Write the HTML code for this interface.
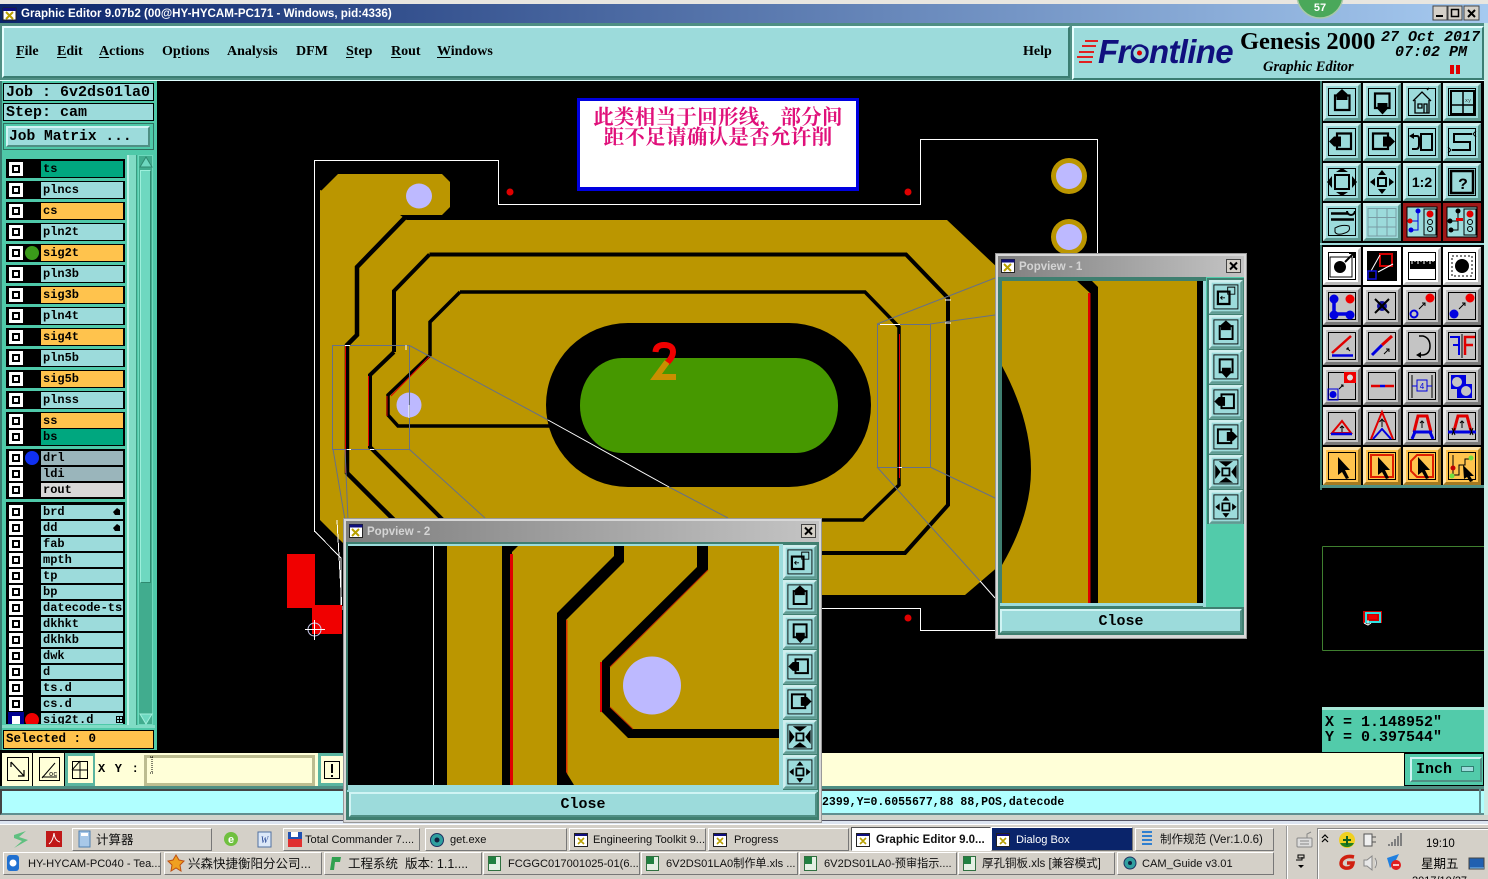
<!DOCTYPE html>
<html><head><meta charset="utf-8"><title>Graphic Editor</title>
<style>
html,body{margin:0;padding:0;background:#000}
#p{position:relative;width:1488px;height:879px;overflow:hidden;background:#000;font-family:"Liberation Sans","Noto Sans CJK SC",sans-serif}
#p div,#p svg,#p span.a{position:absolute;box-sizing:border-box}
.mn{font:bold 14px "Liberation Serif",serif;color:#000;top:44px;white-space:nowrap}
.mn u{text-underline-offset:2px}
.mo{font-family:"Liberation Mono",monospace;font-weight:bold;color:#000;white-space:nowrap}
.fr{background:#000;left:6px;width:119px}
.r{left:41px;width:82px;font:bold 12px/14px "Liberation Mono",monospace;color:#000;padding-left:2px;white-space:nowrap;overflow:hidden}
.l1{line-height:17px}
.c{left:9px;width:14px;height:14px;background:#fff}
.c:after{content:"";position:absolute;left:3px;top:3px;width:8px;height:8px;border:2px solid #000;box-sizing:border-box;background:#fff}
.d{left:25px;width:14px;height:14px;border-radius:50%}
.tb{height:23px;background:#d4d0c8;border:1px solid;border-color:#fff #777 #777 #fff;font-size:11.1px;line-height:22px;color:#111;white-space:nowrap;overflow:hidden;padding-left:21px}
.bev{border:3px solid;border-color:#d0f4f4 #4f8f84 #4f8f84 #d0f4f4;background:#9cdbdb}
.ttl{background:linear-gradient(90deg,#7f7f7f,#c4c4c4);color:#d4d4d4;font-size:11.5px;font-weight:bold}
</style></head><body><div id="p">

<!-- top chrome -->
<div style="left:0;top:0;width:1488px;height:4px;background:#e8e6e0"></div>
<div style="left:0;top:4px;width:1488px;height:19px;background:linear-gradient(90deg,#0a246a,#a6caf0)"></div>
<div style="left:21px;top:7px;color:#fff;font-size:11.6px;font-weight:bold;white-space:nowrap">Graphic Editor 9.07b2 (00@HY-HYCAM-PC171 - Windows, pid:4336)</div>
<div style="left:0;top:23px;width:1488px;height:58px;background:#4f8f84"></div>
<div style="left:2px;top:26px;width:1068px;height:52px;background:#9cdbdb;border:2px solid;border-color:#e6ffff #3b7d72 #3b7d72 #e6ffff"></div>
<div style="left:1072px;top:26px;width:412px;height:54px;background:#9cdbdb;border:2px solid;border-color:#e6ffff #3b7d72 #3b7d72 #e6ffff"></div>
<div style="left:0;top:80px;width:1488px;height:1px;background:#e0ffff"></div>

<div class="mn" style="left:16px"><u>F</u>ile</div>
<div class="mn" style="left:57px"><u>E</u>dit</div>
<div class="mn" style="left:99px"><u>A</u>ctions</div>
<div class="mn" style="left:162px">O<u>p</u>tions</div>
<div class="mn" style="left:227px">Analysis</div>
<div class="mn" style="left:296px">DFM</div>
<div class="mn" style="left:346px"><u>S</u>tep</div>
<div class="mn" style="left:391px"><u>R</u>out</div>
<div class="mn" style="left:437px"><u>W</u>indows</div>
<div class="mn" style="left:1023px">Help</div>

<div style="left:1098px;top:33px;font:italic bold 33px 'Liberation Sans',sans-serif;letter-spacing:-.7px;color:#10107e;white-space:nowrap">Frontline</div>
<div style="left:1240px;top:28px;font:bold 24.5px 'Liberation Serif',serif;color:#000;white-space:nowrap">Genesis 2000</div>
<div style="left:1263px;top:59px;font:italic bold 14.5px 'Liberation Serif',serif;color:#000;white-space:nowrap">Graphic Editor</div>
<div class="mo" style="left:1381px;top:29px;font-size:15px;font-style:italic">27 Oct 2017</div>
<div class="mo" style="left:1395px;top:44px;font-size:15px;font-style:italic">07:02 PM</div>
<div style="left:1450px;top:65px;width:4px;height:9px;background:#e00000"></div>
<div style="left:1456px;top:65px;width:4px;height:9px;background:#e00000"></div>

<!-- main vector canvas -->
<svg style="left:0;top:0" width="1488" height="879" viewBox="0 0 1488 879">
<defs>
<g id="ft"><rect width="38" height="38" fill="#cfeeee"/><path d="M38 0V38H0L3 35H35V3Z" fill="#5f9a92"/><rect x="3" y="3" width="32" height="32" fill="#9cdbdb"/><rect x="5.5" y="5.5" width="27" height="27" fill="none" stroke="#000"/></g>
<g id="fg"><rect width="38" height="38" fill="#e8e8e8"/><path d="M38 0V38H0L3 35H35V3Z" fill="#7a7a7a"/><rect x="3" y="3" width="32" height="32" fill="#c4c4c4"/><rect x="5.5" y="5.5" width="27" height="27" fill="none" stroke="#000"/></g>
<g id="fo"><rect width="38" height="38" fill="#ffe4a8"/><path d="M38 0V38H0L3 35H35V3Z" fill="#a57a22"/><rect x="3" y="3" width="32" height="32" fill="#ffc34d"/><rect x="5.5" y="5.5" width="27" height="27" fill="none" stroke="#000"/></g>
<g id="fw"><rect width="38" height="38" fill="#fff"/><path d="M38 0V38H0L3 35H35V3Z" fill="#bbb"/><rect x="5.5" y="5.5" width="27" height="27" fill="#fff" stroke="#000"/></g>
<g id="iUp"><path d="M12 12.500H26.500V27H12Z" fill="none" stroke="#000" stroke-width="2.200"/><path d="M19 6l5.500 5v6h-11v-6z"/></g>
<g id="iDn"><path d="M12 10.500H26.500V25H12Z" fill="none" stroke="#000" stroke-width="2.200"/><path d="M14.500 20h10v6L19.500 31.500 14.500 26z"/></g>
<g id="iL"><path d="M14 10.500H28V26H14Z" fill="none" stroke="#000" stroke-width="2.200"/><path d="M6 18.500l5-5h7v10h-7z"/></g>
<g id="iR"><path d="M10 10.500H25V26H10Z" fill="none" stroke="#000" stroke-width="2.200"/><path d="M32 18.500l-5-5h-7v10h7z"/></g>
<g id="iFit"><path d="M12 12H26V26H12Z" fill="none" stroke="#000" stroke-width="2"/><path d="M13 9H25L19 5ZM13 29H25L19 33ZM9 13V25L4 19ZM29 13V25L34 19Z"/></g>
<g id="iFit2"><path d="M15 15H23V23H15Z" fill="none" stroke="#000" stroke-width="2"/><path d="M11 7H27L19 13ZM11 31H27L19 25ZM7 11V27L13 19ZM31 11V27L25 19Z"/></g>
<g id="iPan"><path d="M15 15H23V23H15Z" fill="none" stroke="#000" stroke-width="2"/><path d="M19 7l4 5H15ZM19 31l4-5H15ZM7 19l5-4v8ZM31 19l-5-4v8Z"/></g>
<g id="iZm"><path d="M10 13H23V27H10Z" fill="none" stroke="#000" stroke-width="2.500"/><path d="M21 8H29V16H21Z" fill="none" stroke="#000"/><path d="M18 20h-5m2-2l-2 2 2 2" fill="none" stroke="#000"/></g>
</defs>

<rect x="157" y="81" width="1163" height="672" fill="#000"/>

<!-- copper -->
<path d="M320 192L338 174H442L450 182V207L442 215H400L350 265V330L330 350V500L320 510V192Z" fill="#bb9600"/>
<path d="M407 220H947L1000 270V565L965 595H820L345 545L320 520V190L400 215Z" fill="#bb9600"/>
<!-- oval -->
<rect x="546" y="323" width="325" height="164" rx="82" ry="82" fill="#000"/>
<rect x="580" y="358" width="258" height="95" rx="42" ry="47" fill="#469800"/>
<g fill="none" stroke="#000" stroke-linejoin="miter">
<path d="M450 217.500H405L357 267V335L347 345V473L392 518L420 545" stroke-width="4.500"/>
<path d="M429.500 254.500H906L948 298V505L905 553H800M394 352V291L429.500 254.500M394 352L370 375V447L443 520L470 548" stroke-width="4"/>
<path d="M460 292H865L899 327V485L863 520H700M460 292L430 322V355L388 395V415L398 426H550" stroke-width="3.500"/>
</g>
<g stroke="#e00000" fill="none" stroke-width="1">
<path d="M345.500 346V473M368.500 376V446M391 396L429 357M387 396V416M899.500 334V478"/>
</g>
<ellipse cx="419" cy="196" rx="13" ry="12.500" fill="#bdb9ff"/>
<ellipse cx="409" cy="405" rx="12.500" ry="12.500" fill="#bdb9ff"/>
<circle cx="1069" cy="176" r="18" fill="#bb9600"/><circle cx="1069" cy="176" r="13" fill="#bdb9ff"/>
<circle cx="1069" cy="237" r="18" fill="#bb9600"/><circle cx="1069" cy="237" r="13" fill="#bdb9ff"/>
<!-- the 2 -->
<path d="M655.500 352Q656 345 664 345Q673 345 673 352Q673 357 667 363" fill="none" stroke="#f00000" stroke-width="6"/>
<path d="M667 362L656 377H676" fill="none" stroke="#c98f00" stroke-width="6"/>

<!-- profile -->
<g fill="none" stroke="#fff" stroke-width="1" shape-rendering="crispEdges">
<path d="M314.500 532V160.500H498.500V204.500H920.500V139.500H1097.500V260"/>
<path d="M314.500 531L341 558V620"/>
<path d="M820 608.500H920.500V630.500H996"/>
<path d="M337 520L342 610"/>
</g>
<g fill="#e00000"><ellipse cx="510" cy="192" rx="3.500" ry="3.500"/><ellipse cx="908" cy="192" rx="3.500" ry="3.500"/><ellipse cx="908" cy="618" rx="3.500" ry="3.500"/></g>
<!-- popview frames -->
<g fill="none" stroke="#667088" stroke-width="1">
<path d="M332.500 345.500H409.500V449.500H332.500ZM409.500 345.500L548 420M669 487L728 518M333 449L345 520M345 449L348 520M409 449L485 518"/>
<path d="M877.500 324.500H930.500V467.500H877.500ZM877 324L995 278M930 324L995 315M930 467L995 498M877 467L980 581"/>
</g>
<path d="M548 420L669 487M980 581L995 598" stroke="#fff" fill="none"/>
<path d="M345 345.500h5M406 345v5M347 449.500h4M409 405V418M370 449.500h4M880 324.500h20M899 467.500h3M945 300h6M945 323h6" stroke="#fff" fill="none"/>
<!-- red block and cross -->
<rect x="287" y="554" width="28" height="54" fill="#f00000"/>
<rect x="312" y="605" width="30" height="29" fill="#f00000"/>
<g fill="none" stroke="#fff"><circle cx="314.500" cy="629.500" r="6.500" stroke="#cce"/><path d="M305 629.500H325M314.500 620V640"/></g>

<!-- title bar icon + buttons -->
<rect x="3" y="8" width="13" height="12" fill="#fff" stroke="#222"/><rect x="3" y="8" width="13" height="3" fill="#10107e"/><path d="M6 12l7 7M13 12l-7 7" stroke="#b8a000" stroke-width="2"/>
<g><rect x="1433" y="6" width="14" height="14" fill="#d4d0c8" stroke="#444"/><rect x="1436" y="15" width="7" height="2" fill="#000"/>
<rect x="1448" y="6" width="14" height="14" fill="#d4d0c8" stroke="#444"/><rect x="1451.500" y="9.500" width="7" height="7" fill="none" stroke="#000" stroke-width="1.500"/>
<rect x="1464" y="6" width="15" height="14" fill="#d4d0c8" stroke="#444"/><path d="M1468 10l7 7M1475 10l-7 7" stroke="#000" stroke-width="2"/></g>
<!-- badge -->
<circle cx="1320" cy="-5" r="23" fill="#4aa85a" stroke="#a8c8a8" stroke-width="1.500"/>
<text x="1320" y="11" text-anchor="middle" font-family="Liberation Sans" font-weight="bold" font-size="11" fill="#fff">57</text>
<!-- frontline stripes -->
<g fill="#e02020"><path d="M1085 40h13v2h-13zM1082 45h14v2h-14zM1079 51h15v2h-15zM1077 56h16v2h-16zM1079 61h13v2h-13z"/></g>
<circle cx="1139.500" cy="53" r="7.500" fill="#9cdbdb" stroke="#10107e" stroke-width="2.500"/><circle cx="1139.500" cy="53" r="2.500" fill="#e00000"/>

<!-- right toolbar -->
<rect x="1320" y="81" width="164" height="409" fill="#000"/>
<rect x="1320" y="81" width="2" height="409" fill="#3b7d72"/>
<g transform="translate(1323,83)"><use href="#ft"/><use href="#iUp"/></g>
<g transform="translate(1363,83)"><use href="#ft"/><use href="#iDn"/></g>
<g transform="translate(1403,83)"><use href="#ft"/><path d="M10 18L19 9 28 18M12 17V30H26V17M15 21h4v4h-4zM21 21h3v9h-3zM24 7l2-2" fill="none" stroke="#000" stroke-width="1.300"/></g>
<g transform="translate(1443,83)"><use href="#ft"/><path d="M8 8H31V31H8Z" fill="none" stroke="#000" stroke-width="2"/><path d="M20 8V31M8 22H31" fill="none" stroke="#000" stroke-width="1.500"/><text x="22" y="19" font-size="5" font-family="Liberation Mono" fill="#333">xy</text></g>

<g transform="translate(1323,123)"><use href="#ft"/><use href="#iL"/></g>
<g transform="translate(1363,123)"><use href="#ft"/><use href="#iR"/></g>
<g transform="translate(1403,123)"><use href="#ft"/><path d="M18 11H29V27H18Z" fill="none" stroke="#000" stroke-width="2"/><path d="M10 13h4q2 0 2 3v6q0 4-3 4h-4" fill="none" stroke="#000" stroke-width="2"/><path d="M6 13l5-3v6z"/></g>
<g transform="translate(1443,123)"><use href="#ft"/><path d="M29 11H11V19H27V27H9" fill="none" stroke="#000" stroke-width="2"/><path d="M33 8l-3 3 3 3M5 24l3 3-3 3" fill="none" stroke="#000"/></g>

<g transform="translate(1323,163)"><use href="#ft"/><use href="#iFit"/></g>
<g transform="translate(1363,163)"><use href="#ft"/><use href="#iPan"/></g>
<g transform="translate(1403,163)"><use href="#ft"/><text x="19" y="24" text-anchor="middle" font-family="Liberation Sans" font-weight="bold" font-size="14">1:2</text></g>
<g transform="translate(1443,163)"><use href="#ft"/><rect x="8" y="8" width="22" height="22" fill="none" stroke="#000" stroke-width="2.500"/><text x="20" y="26" text-anchor="middle" font-family="Liberation Mono" font-weight="bold" font-size="16">?</text></g>

<g transform="translate(1323,203)"><use href="#ft"/><path d="M8 10.500h17M8 16.500H31" stroke="#000" stroke-width="2.500"/><path d="M24 8a4 4 0 1 0 8 0" fill="none" stroke="#000" stroke-width="2"/><path d="M12 25q7-4 14-2q2 5-4 7q-8 3-10-1z" fill="none" stroke="#000"/></g>
<g transform="translate(1363,203)"><rect width="38" height="38" fill="#cfeeee"/><path d="M38 0V38H0L3 35H35V3Z" fill="#5f9a92"/><rect x="3" y="3" width="32" height="32" fill="#9cdbdb"/><path d="M5 5.500H33V33H5ZM5 14.500H33M5 24H33M14 5V33M24 5V33" fill="none" stroke="#7a9ca4"/></g>
<g transform="translate(1403,203)"><rect width="38" height="38" fill="#a01818"/><rect x="2" y="2" width="34" height="34" fill="#a01818"/><rect x="4" y="4" width="30" height="30" fill="#9cdbdb" stroke="#000"/><rect x="21" y="6" width="12" height="26" fill="none" stroke="#000"/><circle cx="27" cy="11" r="3.500" fill="#e00000"/><circle cx="27" cy="19" r="2.500" fill="none" stroke="#000"/><circle cx="27" cy="26" r="2.500" fill="none" stroke="#000"/><path d="M15 8V27H9M7 18H15" fill="none" stroke="#0000e0" stroke-width="1"/><circle cx="15" cy="8" r="2.500" fill="#0000e0"/><circle cx="8" cy="27" r="2.500" fill="#0000e0"/><circle cx="7" cy="18" r="2.500" fill="#e00000"/></g>
<g transform="translate(1443,203)"><rect width="38" height="38" fill="#a01818"/><rect x="4" y="4" width="30" height="30" fill="#9cdbdb" stroke="#000"/><rect x="21" y="6" width="12" height="26" fill="none" stroke="#000"/><circle cx="27" cy="11" r="3.500" fill="#e00000"/><circle cx="27" cy="19" r="2.500" fill="none" stroke="#000"/><circle cx="27" cy="26" r="2.500" fill="none" stroke="#000"/><path d="M15 8V27H9M7 18H15" fill="none" stroke="#000"/><circle cx="15" cy="8" r="2.500"/><circle cx="8" cy="27" r="2.500"/><circle cx="7" cy="18" r="2.500"/><path d="M13 15h7v3h-7z" fill="#e00000"/></g>

<rect x="1320" y="243" width="164" height="2" fill="#9cdbdb"/>

<g transform="translate(1323,247)"><use href="#fw"/><rect x="7" y="10" width="22" height="20" fill="#fff" stroke="#000"/><circle cx="17" cy="20" r="6"/><path d="M22 15L31 6M26 6h5v5" stroke="#000" fill="none" stroke-width="2"/></g>
<g transform="translate(1363,247)"><rect width="38" height="38" fill="#fff"/><rect x="4" y="4" width="30" height="30" fill="#000"/><rect x="17" y="7" width="12" height="12" fill="none" stroke="#d00000" stroke-width="2"/><path d="M15 25L30 17M17 8L8 24" stroke="#fff"/><rect x="5" y="24" width="8" height="8" fill="none" stroke="#1010e0" stroke-width="1.500"/></g>
<g transform="translate(1403,247)"><use href="#fw"/><rect x="7" y="14" width="25" height="8" fill="#000"/><path d="M9 13v4M12 13v2M15 13v4M18 13v2M21 13v4M24 13v2M27 13v4M30 13v2" stroke="#fff"/></g>
<g transform="translate(1443,247)"><use href="#fw"/><rect x="9" y="9" width="20" height="20" fill="none" stroke="#000" stroke-dasharray="2 2"/><circle cx="19" cy="19" r="7"/></g>

<g transform="translate(1323,287)"><use href="#fg"/><path d="M11 13V27H26" stroke="#0000e0" stroke-width="3.500" fill="none"/><circle cx="11" cy="12" r="4.500" fill="#0000e0"/><circle cx="11" cy="28" r="4.500" fill="#0000e0"/><circle cx="27" cy="28" r="4.500" fill="#0000e0"/><circle cx="27" cy="12" r="4.500" fill="#f00000"/></g>
<g transform="translate(1363,287)"><use href="#fg"/><circle cx="19" cy="19" r="5" fill="#1010a0"/><path d="M12 12L26 26M26 12L12 26" stroke="#000" stroke-width="2"/></g>
<g transform="translate(1403,287)"><use href="#fg"/><circle cx="11" cy="27" r="3.500" fill="none" stroke="#0000e0" stroke-width="2"/><circle cx="27" cy="11" r="4.500" fill="#f00000"/><path d="M16 22L22 16M19 16h3v3" stroke="#000" fill="none"/></g>
<g transform="translate(1443,287)"><use href="#fg"/><circle cx="11" cy="27" r="4.500" fill="#0000e0"/><circle cx="27" cy="11" r="4.500" fill="#f00000"/><path d="M16 22L22 16M19 16h3v3" stroke="#000" fill="none"/></g>

<g transform="translate(1323,327)"><use href="#fg"/><path d="M9 26L28 9" stroke="#e00000" stroke-width="2.500"/><path d="M9 28.500H30" stroke="#0000e0" stroke-width="2.500"/><path d="M24 21l3 3M24 21h2M24 21v2" stroke="#000"/></g>
<g transform="translate(1363,327)"><use href="#fg"/><path d="M9 28L19 18" stroke="#0000e0" stroke-width="3"/><path d="M19 18L29 9" stroke="#e00000" stroke-width="3"/><path d="M21 27l5-5M23 22h3v3" stroke="#000" fill="none"/></g>
<g transform="translate(1403,327)"><use href="#fg"/><path d="M16 9h4q7 2 7 10t-7 9h-3" fill="none" stroke="#000" stroke-width="1.500"/><path d="M18 25l-5 3 5 3z"/></g>
<g transform="translate(1443,327)"><use href="#fg"/><path d="M19 7V31" stroke="#000"/><path d="M7 10H16V28M10 18H16" fill="none" stroke="#0000e0" stroke-width="2"/><path d="M32 10H22V28M22 18H30" fill="none" stroke="#e00000" stroke-width="2.500"/></g>

<g transform="translate(1323,367)"><use href="#fg"/><rect x="21" y="5" width="12" height="11" fill="#f00000"/><circle cx="27" cy="10.500" r="3" fill="#ddd"/><rect x="5" y="22" width="10" height="11" fill="none" stroke="#0000e0"/><circle cx="10" cy="27.500" r="3.500" fill="#0000e0"/><path d="M16 22l4-4M18 18h2v2" stroke="#000" fill="none"/></g>
<g transform="translate(1363,367)"><use href="#fg"/><path d="M8 19H17" stroke="#e00000" stroke-width="2.500"/><path d="M17 19H22" stroke="#0000e0" stroke-width="2.500"/><path d="M22 19H31" stroke="#e00000" stroke-width="2.500"/></g>
<g transform="translate(1403,367)"><use href="#fg"/><path d="M9 8V31M29 8V31" stroke="#000"/><rect x="14" y="13" width="10" height="11" fill="none" stroke="#0000e0"/><path d="M9 19H14M24 19H29" stroke="#0000e0"/><text x="19" y="22" text-anchor="middle" font-size="8" fill="#0000e0" font-family="Liberation Sans">4</text></g>
<g transform="translate(1443,367)"><use href="#fg"/><path d="M8 8h15v9h6v14H14v-9H8Z" fill="#0000e0"/><circle cx="14" cy="15" r="5" fill="#c4c4c4"/><circle cx="23" cy="24" r="5" fill="#c4c4c4"/></g>

<g transform="translate(1323,407)"><use href="#fg"/><path d="M9 26L19 14 28 26Z" fill="none" stroke="#e00000" stroke-width="2"/><path d="M8 27H29" stroke="#0000e0" stroke-width="2.500"/><path d="M19 25V19M17 21l2-2 2 2" stroke="#000" fill="none"/></g>
<g transform="translate(1363,407)"><use href="#fg"/><path d="M8 32L19 5 30 32" fill="none" stroke="#e00000" stroke-width="2"/><path d="M10 32L19 22 28 32" fill="none" stroke="#0000e0" stroke-width="2"/><path d="M19 20V13M16.500 15l2.500-3 2.500 3" stroke="#000" fill="none"/></g>
<g transform="translate(1403,407)"><use href="#fg"/><path d="M11 25L15 9H24L28 25" fill="none" stroke="#e00000" stroke-width="3"/><path d="M10 25H29M9 32L12 25M30 32L27 25" stroke="#0000e0" stroke-width="3"/><path d="M19 21V14M17 16l2-2 2 2" stroke="#000" fill="none"/></g>
<g transform="translate(1443,407)"><use href="#fg"/><path d="M11 24L15 9H24L28 24" fill="none" stroke="#e00000" stroke-width="3"/><path d="M5 25H33" stroke="#0000e0" stroke-width="3"/><path d="M19 21V14M17 16l2-2 2 2M9 21l3 7M12 21l-3 7M27 21l3 7M30 21l-3 7" stroke="#000" fill="none"/></g>

<g transform="translate(1323,447)"><use href="#fo"/><path d="M15 10L27 23H22L26 31 23 32 19 25 15 28Z"/></g>
<g transform="translate(1363,447)"><use href="#fo"/><rect x="8" y="8" width="22" height="22" fill="none" stroke="#e02000" stroke-width="2"/><path d="M15 10L27 23H22L26 31 23 32 19 25 15 28Z"/></g>
<g transform="translate(1403,447)"><use href="#fo"/><path d="M14 8H30V30H14L8 24V14Z" fill="none" stroke="#e02000" stroke-width="2"/><path d="M15 10L27 23H22L26 31 23 32 19 25 15 28Z"/></g>
<g transform="translate(1443,447)"><use href="#fo"/><path d="M10 8V20M10 22V28H16V18H22V12H27" fill="none" stroke="#000"/><circle cx="10" cy="21" r="2.500" fill="#c00000"/><circle cx="9" cy="29" r="2.500" fill="#70e040"/><circle cx="28" cy="11" r="2.500" fill="#70e040"/><path d="M20 18L31 29H27L30 34 27 35 24 30 21 32Z"/></g>
<rect x="1320" y="485" width="164" height="3" fill="#4f8f84"/>

<!-- minimap -->
<rect x="1322" y="490" width="162" height="217" fill="#000"/>
<path d="M1322.500 546.500H1484M1322.500 546.500V650.500M1322.500 650.500H1484" stroke="#3f7f2f" fill="none"/>
<rect x="1363" y="611" width="19" height="12" fill="#d00000"/><rect x="1366" y="613" width="14" height="9" fill="none" stroke="#30e0e0" stroke-width="2"/><rect x="1369" y="615" width="8" height="4" fill="#f00000"/>
<path d="M1364 623l4 2 3-2M1368 620v4" stroke="#fff" fill="none"/>
</svg>

<!-- notice -->
<div style="left:577px;top:98px;width:282px;height:93px;background:#fff;border:3px solid #0000e0;border-bottom-width:4px;color:#e0107a;font:bold 20.500px/20px 'Noto Serif CJK SC','Liberation Serif',serif;letter-spacing:.3px;text-align:center;padding-top:4px;white-space:nowrap">此类相当于回形线，部分间<br>距不足请确认是否允许削</div>

<!-- left panel -->
<div style="left:0;top:81px;width:157px;height:672px;background:#4fc9a9"></div>
<div style="left:0;top:81px;width:2px;height:672px;background:#3b7d72"></div>
<div class="mo" style="left:3px;top:83px;width:151px;height:18px;background:#9cdbdb;border:1px solid #000;font-size:15px;line-height:17px;padding-left:2px;letter-spacing:0">Job : 6v2ds01la0</div>
<div class="mo" style="left:3px;top:103px;width:151px;height:18px;background:#9cdbdb;border:1px solid #000;font-size:15px;line-height:17px;padding-left:2px">Step: cam</div>
<div style="left:3px;top:123px;width:151px;height:27px;background:#4fc9a9;border:1px solid #2f6f5f"></div>
<div class="mo bev" style="left:6px;top:126px;width:144px;height:21px;font-size:14.6px;line-height:19px;padding-left:1px;border-width:2px">Job Matrix ...</div>

<div style="left:127px;top:155px;width:10px;height:570px;background:#80dcc5;border-left:2px solid #b8f0e4;border-right:1px solid #3b9a80"></div>
<div style="left:138px;top:155px;width:15px;height:570px;background:#41ac8e;border:1px solid #6ed8bc"></div>
<div style="left:140px;top:170px;width:11px;height:413px;background:#6ed8c0;border:1px solid;border-color:#9cf0dc #2f8a70 #2f8a70 #9cf0dc"></div>
<svg style="left:139px;top:156px" width="14" height="14"><path d="M7 1L13 11H1Z" fill="#6ed8c0" stroke="#2f8a70"/></svg>
<svg style="left:139px;top:713px" width="14" height="12"><path d="M7 11L13 1H1Z" fill="#6ed8c0" stroke="#a0f0dc"/></svg>

<!-- layer list group 1 -->
<div class="fr" style="top:159px;height:19px"></div><div class="r l1" style="top:161px;height:16px;background:#00a77f">ts</div><div class="c" style="top:162px"></div>
<div class="fr" style="top:181px;height:18px"></div><div class="r l1" style="top:182px;height:16px;background:#9cdbdb">plncs</div><div class="c" style="top:183px"></div>
<div class="fr" style="top:202px;height:18px"></div><div class="r l1" style="top:203px;height:16px;background:#ffc34d">cs</div><div class="c" style="top:204px"></div>
<div class="fr" style="top:223px;height:18px"></div><div class="r l1" style="top:224px;height:16px;background:#9cdbdb">pln2t</div><div class="c" style="top:225px"></div>
<div class="fr" style="top:244px;height:18px"></div><div class="r l1" style="top:245px;height:16px;background:#ffc34d">sig2t</div><div class="c" style="top:246px"></div><div class="d" style="top:246px;background:#3a9a1a"></div>
<div class="fr" style="top:265px;height:18px"></div><div class="r l1" style="top:266px;height:16px;background:#9cdbdb">pln3b</div><div class="c" style="top:267px"></div>
<div class="fr" style="top:286px;height:18px"></div><div class="r l1" style="top:287px;height:16px;background:#ffc34d">sig3b</div><div class="c" style="top:288px"></div>
<div class="fr" style="top:307px;height:18px"></div><div class="r l1" style="top:308px;height:16px;background:#9cdbdb">pln4t</div><div class="c" style="top:309px"></div>
<div class="fr" style="top:328px;height:18px"></div><div class="r l1" style="top:329px;height:16px;background:#ffc34d">sig4t</div><div class="c" style="top:330px"></div>
<div class="fr" style="top:349px;height:18px"></div><div class="r l1" style="top:350px;height:16px;background:#9cdbdb">pln5b</div><div class="c" style="top:351px"></div>
<div class="fr" style="top:370px;height:18px"></div><div class="r l1" style="top:371px;height:16px;background:#ffc34d">sig5b</div><div class="c" style="top:372px"></div>
<div class="fr" style="top:391px;height:18px"></div><div class="r l1" style="top:392px;height:16px;background:#9cdbdb">plnss</div><div class="c" style="top:393px"></div>
<div class="fr" style="top:412px;height:34px"></div>
<div class="r" style="top:413px;height:15px;background:#ffc34d;line-height:16px">ss</div><div class="c" style="top:414px"></div>
<div class="r" style="top:429px;height:16px;background:#00a77f;line-height:16px">bs</div><div class="c" style="top:430px"></div>
<!-- group 2 -->
<div class="fr" style="top:449px;height:50px"></div>
<div class="r" style="top:451px;height:14px;background:#9ab5bb">drl</div><div class="c" style="top:451px"></div><div class="d" style="top:451px;background:#1030f0"></div>
<div class="r" style="top:467px;height:14px;background:#9ab5bb">ldi</div><div class="c" style="top:467px"></div>
<div class="r" style="top:483px;height:14px;background:#d8d8d8">rout</div><div class="c" style="top:483px"></div>
<!-- group 3 -->
<div style="left:6px;top:502px;width:119px;height:222px;background:#000;overflow:hidden">
<div class="r" style="left:35px;top:3px;height:14px;background:#9cdbdb">brd</div>
<div class="r" style="left:35px;top:19px;height:14px;background:#9cdbdb">dd</div>
<div class="r" style="left:35px;top:35px;height:14px;background:#9cdbdb">fab</div>
<div class="r" style="left:35px;top:51px;height:14px;background:#9cdbdb">mpth</div>
<div class="r" style="left:35px;top:67px;height:14px;background:#9cdbdb">tp</div>
<div class="r" style="left:35px;top:83px;height:14px;background:#9cdbdb">bp</div>
<div class="r" style="left:35px;top:99px;height:14px;background:#9cdbdb">datecode-ts</div>
<div class="r" style="left:35px;top:115px;height:14px;background:#9cdbdb">dkhkt</div>
<div class="r" style="left:35px;top:131px;height:14px;background:#9cdbdb">dkhkb</div>
<div class="r" style="left:35px;top:147px;height:14px;background:#9cdbdb">dwk</div>
<div class="r" style="left:35px;top:163px;height:14px;background:#9cdbdb">d</div>
<div class="r" style="left:35px;top:179px;height:14px;background:#9cdbdb">ts.d</div>
<div class="r" style="left:35px;top:195px;height:14px;background:#9cdbdb">cs.d</div>
<div class="r" style="left:35px;top:211px;height:14px;background:#9cdbdb">sig2t.d</div>
<div class="c" style="left:3px;top:3px"></div><div class="c" style="left:3px;top:19px"></div><div class="c" style="left:3px;top:35px"></div><div class="c" style="left:3px;top:51px"></div><div class="c" style="left:3px;top:67px"></div><div class="c" style="left:3px;top:83px"></div><div class="c" style="left:3px;top:99px"></div><div class="c" style="left:3px;top:115px"></div><div class="c" style="left:3px;top:131px"></div><div class="c" style="left:3px;top:147px"></div><div class="c" style="left:3px;top:163px"></div><div class="c" style="left:3px;top:179px"></div><div class="c" style="left:3px;top:195px"></div>
<div style="left:2px;top:210px;width:16px;height:16px;background:#000090"></div><div style="left:6px;top:214px;width:8px;height:8px;background:#fff"></div>
<div class="d" style="left:19px;top:211px;background:#f00000"></div>
<svg style="left:106px;top:5px" width="10" height="10"><path d="M1 5L5 1 8 3V8H3Z"/></svg>
<svg style="left:106px;top:21px" width="10" height="10"><path d="M1 5L5 1 8 3V8H3Z"/></svg>
<svg style="left:110px;top:214px" width="7" height="7"><path d="M.5.5h6v6h-6zM3.500 0v7M0 3.500h7" fill="none" stroke="#000"/></svg>
</div>
<div style="left:2px;top:725px;width:153px;height:3px;background:#80dcc5"></div>
<div class="mo" style="left:3px;top:730px;width:151px;height:19px;background:#ffc34d;border:1px solid #000;font-size:12.500px;line-height:17px;padding-left:2px">Selected : 0</div>
<div style="left:0;top:750px;width:1484px;height:3px;background:#000"></div>

<!-- xy panel -->
<div style="left:1322px;top:707px;width:162px;height:3px;background:#a8e8d8"></div>
<div style="left:1322px;top:710px;width:162px;height:42px;background:#52cbaa"></div>
<div class="mo" style="left:1325px;top:715px;font-size:15px;line-height:15px;white-space:pre">X = 1.148952"
Y = 0.397544"</div>

<!-- bottom bars -->
<div style="left:0;top:753px;width:1484px;height:36px;background:#000"></div>
<div style="left:95px;top:753px;width:1309px;height:33px;background:#ffffd8"></div>
<svg style="left:0;top:753px" width="345" height="34" viewBox="0 753 345 34">
<rect x="2" y="753" width="30" height="33" fill="#ffffd8"/><rect x="33" y="753" width="31" height="33" fill="#ffffd8"/>
<rect x="7.500" y="757.500" width="21" height="23" fill="none" stroke="#000"/><path d="M11 762L24 776M18 776h6v-6M11 762v5" fill="none" stroke="#000" stroke-width="1.200"/>
<rect x="39.500" y="757.500" width="20" height="23" fill="none" stroke="#000"/><path d="M42 778L55 763M42 777H57" stroke="#000" fill="none"/><text x="49" y="776" font-size="7" font-family="Liberation Mono">oc</text>
<rect x="65" y="753" width="30" height="33" fill="#5ab5a0"/><rect x="68" y="756" width="25" height="27" fill="#ffffd8"/><rect x="72.500" y="761.500" width="15" height="17" fill="none" stroke="#000"/><path d="M72 770H88M80 761V778M72 770L80 761" stroke="#000" fill="none"/>
<rect x="144" y="755" width="171" height="31" fill="#bdbd90"/><rect x="147" y="758" width="165" height="25" fill="#ffffd8"/><path d="M152 757V773M150 757h4M150 773h4" stroke="#000" stroke-dasharray="1 1"/>
<rect x="318" y="753" width="27" height="33" fill="#5ab5a0"/><rect x="321" y="756" width="24" height="27" fill="#ffffd8"/><rect x="324.500" y="761.500" width="15" height="17" fill="none" stroke="#000"/><path d="M332 764V773M332 775V777" stroke="#000" stroke-width="2"/>
</svg>
<div class="mo" style="left:98px;top:762px;font-size:12px;letter-spacing:1.200px">X Y :</div>
<div style="left:1404px;top:753px;width:80px;height:33px;background:#000"></div>
<div style="left:1405px;top:754px;width:78px;height:31px;background:#52cbaa"></div>
<div class="mo bev" style="left:1410px;top:757px;width:72px;height:25px;background:#52cbaa;border-width:2px;font-size:15px;line-height:22px;padding-left:4px">Inch</div>
<div style="left:1461px;top:766px;width:13px;height:6px;background:#9cdbdb;border:1px solid #2f7f70"></div>

<div style="left:0;top:786px;width:1488px;height:3px;background:#4f8f84"></div>
<div style="left:0;top:789px;width:1488px;height:26px;background:#b0ffff;border:2px solid;border-color:#444 #e0e0e0 #5f8f90 #444"></div>
<div style="left:1479px;top:789px;width:2px;height:26px;background:#5f8f90"></div>
<div class="mo" style="left:822px;top:796px;font-size:11.500px;font-weight:bold;letter-spacing:.02px">2399,Y=0.6055677,88 88,POS,datecode</div>
<div style="left:0;top:815px;width:1488px;height:5px;background:#d0d4cc"></div>
<div style="left:0;top:820px;width:1488px;height:1px;background:#556"></div>
<div style="left:0;top:821px;width:1488px;height:3px;background:#dce4f0"></div>
<div style="left:1484px;top:23px;width:4px;height:792px;background:#c8ece4"></div>

<!-- popview 2 -->
<div style="left:343px;top:518px;width:479px;height:305px;background:#d8d8d8;border:1px solid #999"></div>
<div class="ttl" style="left:346px;top:521px;width:473px;height:21px;line-height:23px;padding-left:21px">Popview - 2</div>
<div style="left:346px;top:542px;width:473px;height:278px;background:#3f7f70"></div>
<svg style="left:346px;top:542px" width="473" height="278" viewBox="346 542 473 278">
<rect x="348" y="544" width="435" height="246" fill="#9cdbdb"/>
<rect x="348" y="546" width="431" height="239" fill="#bb9600"/>
<rect x="348" y="546" width="99" height="239" fill="#000"/>
<rect x="433" y="546" width="1" height="239" fill="#fff"/>
<rect x="502" y="546" width="10" height="239" fill="#000"/>
<path d="M502 546H518L510 554H502Z" fill="#000"/>
<rect x="510" y="554" width="3" height="231" fill="#e00000"/>
<path d="M614 546H624V562L566 620V785H557V613L614 556Z" fill="#000"/>
<path d="M566 620H567.500V777H566Z" fill="#d83000"/>
<path d="M557 780L566 772 574 785H557Z" fill="#000"/>
<path d="M697 546H708V570L610 667V707L633 729H779V738H628L602 712V661L697 567Z" fill="#000"/>
<path d="M600 662H602V712H600Z" fill="#e00000"/><path d="M708 570L610 667" stroke="#c03000" fill="none"/><path d="M610 707L633 729" stroke="#c03000" fill="none"/>
<circle cx="652" cy="685.500" r="29" fill="#bdb9ff"/>
<rect x="779" y="544" width="4" height="246" fill="#9cdbdb"/>
<rect x="783" y="542" width="36" height="250" fill="#3f7f70"/>
<g transform="translate(783,545) scale(.89,.89)"><use href="#ft"/><use href="#iZm"/></g>
<g transform="translate(783,580) scale(.89,.89)"><use href="#ft"/><use href="#iUp"/></g>
<g transform="translate(783,615) scale(.89,.89)"><use href="#ft"/><use href="#iDn"/></g>
<g transform="translate(783,650) scale(.89,.89)"><use href="#ft"/><use href="#iL"/></g>
<g transform="translate(783,685) scale(.89,.89)"><use href="#ft"/><use href="#iR"/></g>
<g transform="translate(783,720) scale(.89,.89)"><use href="#ft"/><use href="#iFit2"/></g>
<g transform="translate(783,755) scale(.89,.89)"><use href="#ft"/><use href="#iPan"/></g>
<rect x="347" y="790" width="471" height="2" fill="#9cdbdb"/>
</svg>
<div class="mo bev" style="left:349px;top:792px;width:468px;height:25px;font-size:15px;line-height:21px;text-align:center;border-width:2px">Close</div>
<svg style="left:349px;top:524px" width="16" height="16"><rect x=".5" y=".5" width="13" height="13" fill="#fff" stroke="#222"/><rect x=".5" y=".5" width="13" height="3" fill="#10107e"/><path d="M3 5l7 7M10 5l-7 7" stroke="#b8a000" stroke-width="2"/></svg>
<svg style="left:801px;top:524px" width="16" height="15"><rect x=".5" y=".5" width="14" height="13" fill="#d4d0c8" stroke="#444"/><path d="M4 3.500l7 7M11 3.500l-7 7" stroke="#000" stroke-width="2"/></svg>

<!-- popview 1 -->
<div style="left:995px;top:253px;width:252px;height:386px;background:#d8d8d8;border:1px solid #999"></div>
<div class="ttl" style="left:998px;top:256px;width:246px;height:21px;line-height:23px;padding-left:21px">Popview - 1</div>
<div style="left:998px;top:277px;width:246px;height:358px;background:#3f7f70"></div>
<svg style="left:998px;top:277px" width="246" height="358" viewBox="998 277 246 358">
<rect x="1002" y="281" width="201" height="322" fill="#bb9600"/>
<path d="M1002 366Q1031 420 1031 470Q1031 515 1002 565Z" fill="#000"/>
<path d="M1077 281H1098V603H1090V293Z" fill="#000"/><path d="M1092 281H1098V287Z" fill="#bb9600"/>
<rect x="1088" y="293" width="2.500" height="310" fill="#e00000"/>
<rect x="1197" y="281" width="6" height="322" fill="#000"/>
<rect x="1206" y="277" width="38" height="330" fill="#52cbaa"/>
<rect x="1203" y="281" width="3" height="326" fill="#9cdbdb"/>
<rect x="1000" y="603" width="206" height="3" fill="#9cdbdb"/>
<rect x="1207" y="278" width="37" height="246" fill="#3f7f70"/>
<g transform="translate(1209,280) scale(.89,.89)"><use href="#ft"/><use href="#iZm"/></g>
<g transform="translate(1209,315) scale(.89,.89)"><use href="#ft"/><use href="#iUp"/></g>
<g transform="translate(1209,350) scale(.89,.89)"><use href="#ft"/><use href="#iDn"/></g>
<g transform="translate(1209,385) scale(.89,.89)"><use href="#ft"/><use href="#iL"/></g>
<g transform="translate(1209,420) scale(.89,.89)"><use href="#ft"/><use href="#iR"/></g>
<g transform="translate(1209,455) scale(.89,.89)"><use href="#ft"/><use href="#iFit2"/></g>
<g transform="translate(1209,490) scale(.89,.89)"><use href="#ft"/><use href="#iPan"/></g>
</svg>
<div class="mo bev" style="left:1000px;top:609px;width:242px;height:24px;font-size:15px;line-height:22px;text-align:center;border-width:2px">Close</div>
<svg style="left:1001px;top:259px" width="16" height="16"><rect x=".5" y=".5" width="13" height="13" fill="#fff" stroke="#222"/><rect x=".5" y=".5" width="13" height="3" fill="#10107e"/><path d="M3 5l7 7M10 5l-7 7" stroke="#b8a000" stroke-width="2"/></svg>
<svg style="left:1226px;top:259px" width="16" height="15"><rect x=".5" y=".5" width="14" height="13" fill="#d4d0c8" stroke="#444"/><path d="M4 3.500l7 7M11 3.500l-7 7" stroke="#000" stroke-width="2"/></svg>

<!-- taskbar -->
<div style="left:0;top:824px;width:1488px;height:55px;background:#d4d0c8;border-top:1px solid #fff"></div>
<div class="tb" style="left:72px;top:828px;width:140px;font-size:12.500px;padding-left:23px;font-family:'Liberation Sans','Noto Sans CJK SC',sans-serif">计算器</div>
<div class="tb" style="left:283px;top:828px;width:137px">Total Commander 7....</div>
<div class="tb" style="left:425px;top:828px;width:142px;padding-left:24px">get.exe</div>
<div class="tb" style="left:569px;top:828px;width:137px;padding-left:23px">Engineering Toolkit 9...</div>
<div class="tb" style="left:708px;top:828px;width:141px;padding-left:25px">Progress</div>
<div class="tb" style="left:851px;top:827px;width:140px;height:24px;background:#fff;font-size:11.5px;line-height:24px;font-weight:bold;border-color:#555 #fff #fff #555;padding-left:24px">Graphic Editor 9.0...</div>
<div class="tb" style="left:991px;top:827px;width:142px;height:24px;background:#0a246a;color:#fff;line-height:24px;padding-left:24px">Dialog Box</div>
<div class="tb" style="left:1135px;top:828px;width:139px;padding-left:24px;font-size:11.5px">制作规范 (Ver:1.0.6)</div>
<div class="tb" style="left:3px;top:852px;width:158px;padding-left:24px">HY-HYCAM-PC040 - Tea...</div>
<div class="tb" style="left:164px;top:852px;width:158px;padding-left:23px;font-size:12.500px">兴森快捷衡阳分公司...</div>
<div class="tb" style="left:324px;top:852px;width:158px;padding-left:23px;font-size:12.500px">工程系统&nbsp; 版本: 1.1....</div>
<div class="tb" style="left:483px;top:852px;width:157px;padding-left:24px">FCGGC017001025-01(6...</div>
<div class="tb" style="left:641px;top:852px;width:157px;padding-left:24px">6V2DS01LA0制作单.xls ...</div>
<div class="tb" style="left:799px;top:852px;width:158px;padding-left:24px">6V2DS01LA0-预审指示....</div>
<div class="tb" style="left:958px;top:852px;width:157px;padding-left:23px;font-size:11.5px">厚孔铜板.xls [兼容模式]</div>
<div class="tb" style="left:1117px;top:852px;width:157px;padding-left:24px">CAM_Guide v3.01</div>
<svg style="left:0;top:824px" width="1488" height="55" viewBox="0 824 1488 55">
<path d="M14 835l12-4-7 6 9 3-14 8 8-7-8-3z" fill="#60c080"/>
<rect x="46" y="831" width="16" height="16" fill="#c01818"/><path d="M49 844q4-3 5-11q1 8 6 9" fill="none" stroke="#fff"/>
<rect x="79" y="831" width="11" height="16" fill="#a8c8e8" stroke="#5080b0"/><rect x="81" y="833" width="7" height="3" fill="#fff"/>
<circle cx="231" cy="839" r="7" fill="#70c040"/><text x="231" y="843" text-anchor="middle" font-size="11" font-weight="bold" fill="#fff" font-family="Liberation Sans">e</text>
<rect x="258" y="832" width="13" height="15" fill="#dce8f8" stroke="#5070a0"/><text x="264.500" y="843" text-anchor="middle" font-size="9" font-style="italic" fill="#204090" font-family="Liberation Serif">W</text>
<rect x="288" y="832" width="14" height="15" fill="#e03030"/><rect x="288" y="832" width="14" height="7" fill="#2050b0"/><rect x="291" y="832" width="7" height="5" fill="#fff"/>
<circle cx="437" cy="840" r="6.500" fill="#30a0a0" stroke="#203060"/><circle cx="437" cy="840" r="2.500" fill="#102040"/>
<g fill="#fff" stroke="#222"><rect x="574.500" y="833.500" width="13" height="13"/><rect x="713.500" y="833.500" width="13" height="13"/><rect x="856.500" y="833.500" width="13" height="13"/><rect x="996.500" y="833.500" width="13" height="13"/></g>
<g fill="#10107e"><rect x="575" y="834" width="12" height="2"/><rect x="714" y="834" width="12" height="2"/><rect x="857" y="834" width="12" height="2"/><rect x="997" y="834" width="12" height="2"/></g>
<path d="M578 838l6 6M584 838l-6 6M717 838l6 6M723 838l-6 6M860 838l6 6M866 838l-6 6M1000 838l6 6M1006 838l-6 6" stroke="#b8a000" stroke-width="1.600"/>
<path d="M1142 832h10M1142 836h10M1142 840h10M1142 844h10" stroke="#3080d0" stroke-width="2"/>
<rect x="7" y="855" width="12" height="16" rx="3" fill="#2070d0"/><circle cx="13" cy="863" r="3.500" fill="#fff"/>
<path d="M176 855l3 5 5 1-4 4 1 6-5-3-5 3 1-6-4-4 5-1z" fill="#f0a020" stroke="#c05010"/>
<path d="M332 857h9l-1 5h-5l-1 8h-4z" fill="#30a050"/>
<g fill="#e4f0e4" stroke="#307040"><rect x="488.500" y="856.500" width="12" height="14"/><rect x="646.500" y="856.500" width="12" height="14"/><rect x="804.500" y="856.500" width="12" height="14"/><rect x="963.500" y="856.500" width="12" height="14"/></g>
<g fill="#208040"><rect x="489" y="857" width="7" height="7"/><rect x="647" y="857" width="7" height="7"/><rect x="805" y="857" width="7" height="7"/><rect x="964" y="857" width="7" height="7"/></g>
<circle cx="1130" cy="863" r="6" fill="#30a0a0" stroke="#203060"/><circle cx="1130" cy="863" r="2" fill="#102040"/>

<path d="M1286.500 826V879" stroke="#999"/><path d="M1287.500 826V879" stroke="#fff"/>
<rect x="1297" y="838" width="15" height="9" rx="1" fill="#ddd" stroke="#888"/><path d="M1300 841h9M1300 844h9M1307 838v-4l4-2" stroke="#888" fill="none"/>
<path d="M1298 858h6v-3h-6zM1296 860h6v-3" fill="none" stroke="#000"/><path d="M1298 865h6l-3 3z"/>
<path d="M1317.500 879V828.500H1488" fill="none" stroke="#888"/><path d="M1318.500 879V829.500H1488" fill="none" stroke="#fff"/>
<path d="M1322 838l3-3 3 3M1322 842l3-3 3 3" fill="none" stroke="#000" stroke-width="1.200"/>
<circle cx="1347" cy="840" r="8" fill="#f0d020"/><path d="M1340 843a8 8 0 0 0 14 0" fill="#208020"/><path d="M1347 836V845M1343 840H1351" stroke="#106020" stroke-width="2"/>
<path d="M1364 834h8v12h-8zM1372 837h4M1372 842h4" fill="#f0f0f0" stroke="#555"/>
<path d="M1389 846v-2M1392 846v-4M1395 846v-7M1398 846v-10M1401 846v-13" stroke="#808080" stroke-width="2"/>
<path d="M1354 857q-8-2-12 3q-3 6 3 8q7 1 8-5h-6" fill="none" stroke="#d02010" stroke-width="3.500"/>
<path d="M1364 860h3l5-4v14l-5-4h-3zM1375 858q3 5 0 10" fill="#e8e8e8" stroke="#888"/>
<path d="M1387 858l12-4-3 6-6 8z" fill="#2080e0"/><circle cx="1396" cy="865" r="5" fill="#e02020"/><path d="M1393 865h6" stroke="#fff" stroke-width="1.500"/>
<rect x="1469" y="858" width="15" height="11" fill="#2060b0" stroke="#444"/><path d="M1470 868h14" stroke="#80c0f0"/>
</svg>
<div style="left:1426px;top:838px;font-size:11.500px;color:#000">19:10</div>
<div style="left:1421px;top:855px;font-size:12.500px;color:#000;font-family:'Noto Sans CJK SC',sans-serif;line-height:16px">星期五</div>
<div style="left:1412px;top:875px;font-size:11px;color:#000">2017/10/27</div>
</div></body></html>
